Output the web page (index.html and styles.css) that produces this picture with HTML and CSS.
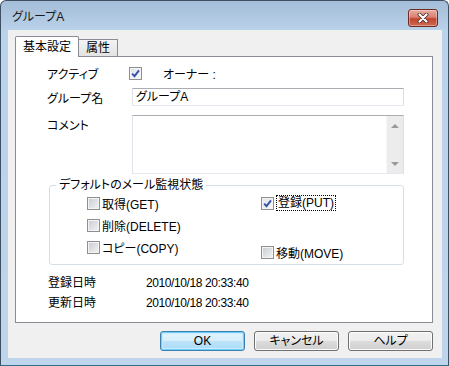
FILE: index.html
```html
<!DOCTYPE html>
<html lang="ja">
<head>
    <meta charset="UTF-8">
    <title>グループA</title>
    <link rel="stylesheet" href="styles.css">
</head>
<body>
    <div class="window">
        <div class="titlebar">
            <span class="title">グループA</span>
            <span class="close">
                <svg width="12" height="10" viewBox="0 0 12 10">
                    <path d="M2.5 1.5 L9.5 8.5 M9.5 1.5 L2.5 8.5" stroke="#4a2a26" stroke-width="3.8" stroke-linecap="round"/>
                    <path d="M2.5 1.5 L9.5 8.5 M9.5 1.5 L2.5 8.5" stroke="#fff" stroke-width="2.2" stroke-linecap="round"/>
                </svg>
            </span>
        </div>
        <div class="client">
            <div class="tabs">
                <div class="tab active">基本設定</div>
                <div class="tab">属性</div>
            </div>
            <div class="panel">
                <div class="row row-active">
                    <span class="label">アクティブ</span>
                    <span class="cb checked"><svg width="11" height="11" viewBox="0 0 11 11"><path d="M2.2 5.6 L4.5 8.2 L9 2.4" fill="none" stroke="#3551a8" stroke-width="1.9"/></svg></span>
                    <span class="owner">オーナー :</span>
                </div>
                <div class="row row-name">
                    <span class="label">グループ名</span>
                    <div class="input">グループA</div>
                </div>
                <div class="row row-comment">
                    <span class="label">コメント</span>
                    <div class="textarea">
                        <div class="scroll"><span class="arrow up"></span><span class="arrow down"></span></div>
                    </div>
                </div>
                <fieldset class="group">
                    <legend>デフォルトのメール監視状態</legend>
                    <div class="options">
                        <div class="opt"><span class="cb"></span>取得(GET)</div>
                        <div class="opt"><span class="cb checked"><svg width="11" height="11" viewBox="0 0 11 11"><path d="M2.2 5.6 L4.5 8.2 L9 2.4" fill="none" stroke="#3551a8" stroke-width="1.9"/></svg></span><span class="focus">登録(PUT)</span></div>
                        <div class="opt"><span class="cb"></span>削除(DELETE)</div>
                        <div></div>
                        <div class="opt"><span class="cb"></span>コピー(COPY)</div>
                        <div class="opt move"><span class="cb"></span>移動(MOVE)</div>
                    </div>
                </fieldset>
                <div class="dates">
                    <div class="date"><span class="dlabel">登録日時</span><span class="stamp">2010/10/18 20:33:40</span></div>
                    <div class="date"><span class="dlabel">更新日時</span><span class="stamp">2010/10/18 20:33:40</span></div>
                </div>
            </div>
            <div class="buttons">
                <button class="btn default">OK</button>
                <button class="btn">キャンセル</button>
                <button class="btn">ヘルプ</button>
            </div>
        </div>
    </div>
</body>
</html>
```

FILE: styles.css
```css
* {
    box-sizing: border-box;
}
body {
    margin: 0;
    background-color: #fff;
    color: #000;
    font-family: "Liberation Sans", "Noto Sans CJK JP", sans-serif;
    font-size: 12px;
    font-feature-settings: "palt";
}
.window {
    width: 449px;
    height: 366px;
    border: 1px solid #3e4f61;
    border-bottom-color: #2a7088;
    border-radius: 6px 6px 0 0;
    background: linear-gradient(#a4bdd8, #bad2ea 30px, #bed5ec);
    padding: 0 6px 7px 7px;
    display: flex;
    flex-direction: column;
}
.titlebar {
    height: 29px;
    flex: none;
    display: flex;
    justify-content: space-between;
    align-items: flex-start;
    padding: 0 4px;
}
.title {
    margin-top: 8px;
    line-height: 16px;
    color: #1a1a1a;
}
.close {
    margin-top: 8px;
    width: 30px;
    height: 18px;
    border: 1px solid #6e2a22;
    border-radius: 3px;
    background: linear-gradient(#e8aca2, #d8806f 45%, #c2442f 55%, #cf6a52);
    box-shadow: inset 0 0 0 1px rgba(255, 255, 255, 0.35);
    display: flex;
    justify-content: center;
    align-items: center;
}
.client {
    flex: 1;
    background-color: #f0f0f0;
    padding: 6px 9px 0 7px;
}
.tabs {
    display: flex;
    align-items: flex-end;
    height: 20px;
}
.tab {
    width: 39px;
    height: 17px;
    border: 1px solid #898c95;
    border-left: none;
    border-bottom: none;
    background: linear-gradient(#f3f3f3, #e3e3e3);
    line-height: 16px;
    text-align: center;
}
.tab.active {
    width: 64px;
    height: 21px;
    margin-bottom: -1px;
    border-left: 1px solid #898c95;
    border-radius: 2px 2px 0 0;
    background: #fff;
    line-height: 20px;
    position: relative;
    z-index: 1;
}
.panel {
    width: 418px;
    height: 267px;
    background-color: #fff;
    border: 1px solid #898c95;
    padding: 7px 0 0 31px;
}
.row {
    display: flex;
    align-items: center;
    height: 18px;
}
.label {
    width: 85px;
    flex: none;
}
.row-active .label {
    width: 82px;
}
.owner {
    margin-left: 21px;
}
.row-name {
    margin-top: 6px;
}
.input {
    width: 272px;
    height: 18px;
    border: 1px solid;
    border-color: #abadb3 #dbdfe6 #e3e9ef #e2e3ea;
    padding-left: 3px;
    line-height: 16px;
}
.row-comment {
    margin-top: 9px;
    height: 59px;
    align-items: flex-start;
}
.row-comment .label {
    margin-top: 1px;
}
.textarea {
    width: 272px;
    height: 59px;
    border: 1px solid;
    border-color: #abadb3 #dbdfe6 #e3e9ef #e2e3ea;
    display: flex;
    justify-content: flex-end;
}
.scroll {
    width: 17px;
    background-color: #ececec;
    border-left: 1px solid #f6f6f6;
    display: flex;
    flex-direction: column;
    justify-content: space-between;
    align-items: center;
    padding: 8px 0 7px;
}
.arrow {
    width: 0;
    height: 0;
    border-left: 4px solid transparent;
    border-right: 4px solid transparent;
}
.arrow.up {
    border-bottom: 4px solid #999;
}
.arrow.down {
    border-top: 4px solid #999;
}
.group {
    margin: 4px 0 0 2px;
    width: 355px;
    border: 1px solid #d5dfe5;
    border-radius: 3px;
    padding: 0 0 6px 0;
}
.group legend {
    margin-left: 6px;
    padding: 0 3px;
    line-height: 14px;
}
.options {
    display: grid;
    grid-template-columns: 174px auto;
    grid-auto-rows: 22px;
    padding-left: 37px;
}
.opt {
    display: flex;
    align-items: center;
    gap: 2px;
    height: 22px;
}
.opt.move {
    margin-top: 5px;
}
.cb {
    flex: none;
    width: 13px;
    height: 13px;
    border: 1px solid #8e8f8f;
    box-shadow: inset 0 0 0 1px #f4f4f4;
    background: linear-gradient(135deg, #c6cbd3, #eeeeee 85%);
}
.cb.checked {
    background: linear-gradient(135deg, #dde2ea, #fafafa);
}
.cb svg {
    display: block;
}
.focus {
    border: 1px dotted #000;
    padding: 0 1px;
    line-height: 14px;
}
.dates {
    margin-top: 8px;
}
.date {
    display: flex;
    height: 20px;
    line-height: 20px;
    padding-left: 1px;
}
.dlabel {
    width: 98px;
}
.stamp {
    letter-spacing: -0.4px;
}
.buttons {
    display: flex;
    justify-content: flex-end;
    gap: 9px;
    margin-top: 8px;
}
.btn {
    width: 85px;
    height: 20px;
    padding: 0;
    border: 1px solid #707070;
    border-radius: 3px;
    background: linear-gradient(#f2f2f2, #ebebeb 50%, #dddddd 50%, #cfcfcf);
    box-shadow: inset 0 0 0 1px #fcfcfc;
    font: inherit;
    color: #000;
    line-height: 18px;
}
.btn.default {
    border-color: #3c7fb1;
    background: linear-gradient(#e5f5fd, #d4eefc 50%, #bde4fa 50%, #a9dbf6);
    box-shadow: inset 0 0 0 1px #6fd0f7, inset 0 0 0 2px #c8ecfc;
}
```
